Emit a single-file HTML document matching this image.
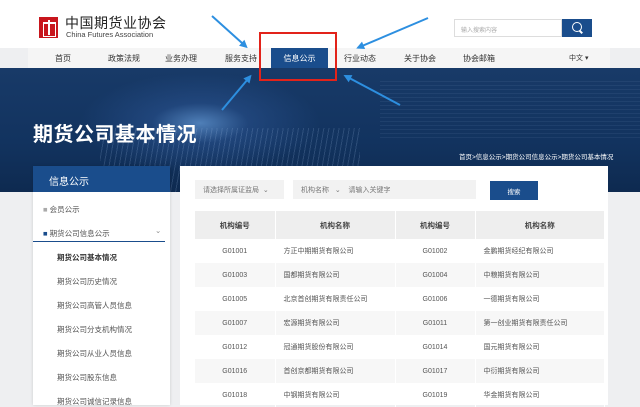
<!DOCTYPE html>
<html><head><meta charset="utf-8"><style>
*{margin:0;padding:0;box-sizing:border-box}
body{width:640px;height:405px;overflow:hidden;background:#eeeff1;font-family:"Liberation Sans","Noto Sans CJK SC",sans-serif;position:relative;color:#333}
.hdr{position:absolute;left:0;top:0;width:640px;height:48px;background:#fff}
.logo{position:absolute;left:39px;top:17px;width:19px;height:21px;background:#c8161d}
.logo:after{content:"";position:absolute;left:4px;top:5px;width:11px;height:12px;border:1.5px solid #fff;border-top-width:2px}
.logo:before{content:"";position:absolute;left:9px;top:3px;width:1.5px;height:15px;background:#fff}
.cn{position:absolute;left:65px;top:16px;font-size:14px;line-height:14px;color:#222;letter-spacing:0.5px}
.en{position:absolute;left:66px;top:31px;font-size:7.5px;line-height:8px;color:#444}
.search{position:absolute;left:454px;top:19px;width:108px;height:18px;border:1px solid #ddd;font-size:6px;color:#aaa;padding:5px 0 0 6px}
.sbtn{position:absolute;left:562px;top:19px;width:30px;height:18px;background:#1a4d8c}
.sbtn:before{content:"";position:absolute;left:10px;top:3px;width:8px;height:8px;border:1.5px solid #fff;border-radius:50%}
.sbtn:after{content:"";position:absolute;left:17px;top:12px;width:4px;height:1.5px;background:#fff;transform:rotate(45deg)}
.nav{position:absolute;left:28px;top:48px;width:582px;height:20px;background:#f5f5f5}
.nav span{position:absolute;top:5px;font-size:8px;color:#333}
.nav .act{top:0;height:20px;width:57px;background:#1a4d8c;color:#fff;text-align:center;padding-top:5px}
.banner{position:absolute;left:0;top:68px;width:640px;height:124px;background:radial-gradient(ellipse 120px 50px at 200px 55px,#4f7fb8 0%,rgba(40,80,140,0.6) 40%,transparent 100%),linear-gradient(180deg,#183a68 0%,#12335f 60%,#0e2a50 100%)}
.banner:before{content:"";position:absolute;left:100px;top:60px;width:260px;height:64px;background:repeating-linear-gradient(100deg,rgba(160,190,230,.18) 0 1px,transparent 1px 5px);}
.banner:after{content:"";position:absolute;left:380px;top:10px;width:260px;height:60px;background:repeating-linear-gradient(0deg,rgba(160,190,230,.08) 0 1px,transparent 1px 4px)}
.btitle{position:absolute;left:33px;top:118px;font-size:20px;font-weight:bold;color:#fff;letter-spacing:0.5px}
.crumb{position:absolute;left:459px;top:151px;font-size:6.5px;color:#fff}
.side{position:absolute;left:33px;top:166px;width:137px;height:239px;background:#fff;box-shadow:0 0 3px rgba(0,0,0,.15)}
.shd{height:26px;background:#1a4d8c;color:#fff;font-size:10px;padding:7px 0 0 16px}
.side .it{position:absolute;font-size:7.5px;color:#555}
.main{position:absolute;left:180px;top:166px;width:428px;height:239px;background:#fff}
.f{position:absolute;top:14px;height:19px;background:#f2f2f2;font-size:7px;color:#777;padding:5px 0 0 8px}
.go{position:absolute;left:310px;top:15px;width:48px;height:19px;background:#1a4d8c;color:#fff;font-size:6.5px;text-align:center;padding-top:5px}
table{position:absolute;left:15px;top:45px;width:410px;border-collapse:collapse;font-size:7px;color:#555}
td,th{text-align:center;height:24px;border-right:1px solid #fff}
th{height:28px;background:#eeeeee;font-weight:bold;color:#444;font-size:7.5px}
tr:nth-child(odd) td{background:#f7f7f7}
td.l{text-align:left;padding-left:8px}
.red{position:absolute;left:259px;top:32px;width:78px;height:49px;border:2px solid #e2231a}
.ar{position:absolute;height:2px;background:#2d8fe0;transform-origin:0 50%}
.ar:after{content:"";position:absolute;right:-2px;top:-3px;border-left:8px solid #2d8fe0;border-top:4px solid transparent;border-bottom:4px solid transparent}
</style></head><body>
<div class="hdr">
<div class="logo"></div>
<div class="cn">中国期货业协会</div>
<div class="en">China Futures Association</div>
<div class="search">输入搜索内容</div><div class="sbtn"></div>
</div>
<div class="nav">
<span style="left:27px">首页</span><span style="left:80px">政策法规</span><span style="left:137px">业务办理</span><span style="left:197px">服务支持</span>
<span class="act" style="left:243px">信息公示</span>
<span style="left:316px">行业动态</span><span style="left:376px">关于协会</span><span style="left:435px">协会邮箱</span><span style="left:541px;font-size:7px">中文 ▾</span>
</div>
<div class="banner"></div>
<div class="btitle">期货公司基本情况</div>
<div class="crumb">首页&gt;信息公示&gt;期货公司信息公示&gt;期货公司基本情况</div>
<div class="side">
<div class="shd">信息公示</div>
<div class="it" style="left:10px;top:38px"><span style="color:#aaa">■</span> 会员公示</div>
<div class="it" style="left:10px;top:62px"><span style="color:#1a4d8c">■</span> 期货公司信息公示</div>
<div class="it" style="left:122px;top:60px;color:#888">⌄</div>
<div style="position:absolute;left:0;top:75px;width:132px;height:1px;background:#1a4d8c"></div>
<div class="it" style="left:24px;top:86px;font-weight:bold;color:#333">期货公司基本情况</div>
<div class="it" style="left:24px;top:110px">期货公司历史情况</div>
<div class="it" style="left:24px;top:134px">期货公司高管人员信息</div>
<div class="it" style="left:24px;top:158px">期货公司分支机构情况</div>
<div class="it" style="left:24px;top:182px">期货公司从业人员信息</div>
<div class="it" style="left:24px;top:206px">期货公司股东信息</div>
<div class="it" style="left:24px;top:230px">期货公司诚信记录信息</div>
</div>
<div class="main">
<div class="f" style="left:15px;width:89px">请选择所属证监局 &nbsp;⌄</div>
<div class="f" style="left:113px;width:183px">机构名称 &nbsp;&nbsp;⌄ &nbsp;&nbsp;&nbsp;请输入关键字</div>
<div class="go">搜索</div>
<table>
<tr><th style="width:80px">机构编号</th><th style="width:120px">机构名称</th><th style="width:80px">机构编号</th><th>机构名称</th></tr>
<tr><td>G01001</td><td class="l">方正中期期货有限公司</td><td>G01002</td><td class="l">金鹏期货经纪有限公司</td></tr>
<tr><td>G01003</td><td class="l">国都期货有限公司</td><td>G01004</td><td class="l">中粮期货有限公司</td></tr>
<tr><td>G01005</td><td class="l">北京首创期货有限责任公司</td><td>G01006</td><td class="l">一德期货有限公司</td></tr>
<tr><td>G01007</td><td class="l">宏源期货有限公司</td><td>G01011</td><td class="l">第一创业期货有限责任公司</td></tr>
<tr><td>G01012</td><td class="l">冠通期货股份有限公司</td><td>G01014</td><td class="l">国元期货有限公司</td></tr>
<tr><td>G01016</td><td class="l">首创京都期货有限公司</td><td>G01017</td><td class="l">中衍期货有限公司</td></tr>
<tr><td>G01018</td><td class="l">中钢期货有限公司</td><td>G01019</td><td class="l">华金期货有限公司</td></tr>
</table>
</div>
<div class="red"></div>
<div class="ar" style="left:212px;top:15px;width:46px;transform:rotate(42deg)"></div>
<div class="ar" style="left:428px;top:17px;width:76px;transform:rotate(157deg)"></div>
<div class="ar" style="left:222px;top:109px;width:44px;transform:rotate(-50deg)"></div>
<div class="ar" style="left:400px;top:104px;width:62px;transform:rotate(-152deg)"></div>
</body></html>
